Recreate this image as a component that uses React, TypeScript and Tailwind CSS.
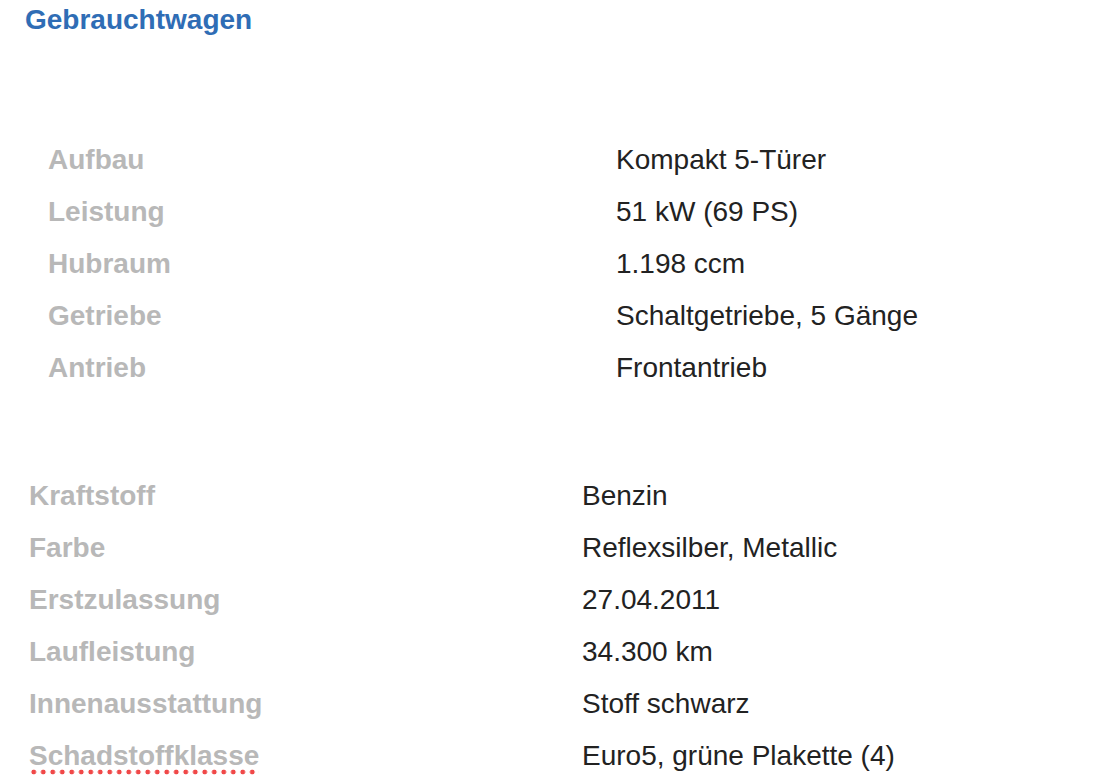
import React from 'react'

const main = [
  ['Aufbau', 'Kompakt 5-Türer'],
  ['Leistung', '51 kW (69 PS)'],
  ['Hubraum', '1.198 ccm'],
  ['Getriebe', 'Schaltgetriebe, 5 Gänge'],
  ['Antrieb', 'Frontantrieb'],
]

const extra = [
  ['Kraftstoff', 'Benzin'],
  ['Farbe', 'Reflexsilber, Metallic'],
  ['Erstzulassung', '27.04.2011'],
  ['Laufleistung', '34.300 km'],
  ['Innenausstattung', 'Stoff schwarz'],
  ['Schadstoffklasse', 'Euro5, grüne Plakette (4)'],
]

export default function App() {
  return (
    <div
      className="w-[1112px] h-[782px] overflow-hidden bg-white text-[28px] leading-[32px]"
      style={{ fontFamily: '"Liberation Sans", Arial, sans-serif' }}
    >
      <h1 className="pl-[25px] pt-[4px] font-bold text-[#2f6db5]">Gebrauchtwagen</h1>

      {/* Technische Daten */}
      <div className="mt-[98px] pl-[48px]">
        {main.map(([label, value]) => (
          <div key={label} className="flex h-[52px] items-center">
            <div className="w-[569px] font-bold text-[#b8b8b8]">{label}</div>
            <div className="-ml-px text-[#222]">{value}</div>
          </div>
        ))}
      </div>

      {/* Weitere Angaben */}
      <div className="mt-[76px] pl-[29px]">
        {extra.map(([label, value]) => (
          <div key={label} className="flex h-[52px] items-center">
            <div className="w-[553px] font-bold text-[#b8b8b8]">
              {label === 'Schadstoffklasse' ? (
                <span className="relative inline-block">
                  {label}
                  {/* spellcheck squiggle */}
                  <span className="absolute left-0 right-0 -bottom-[3px] h-[6px] bg-[radial-gradient(circle,#f04848_2.1px,transparent_2.7px)] bg-[length:9.5px_6px] bg-repeat-x" />
                </span>
              ) : (
                label
              )}
            </div>
            <div className="text-[#222]">{value}</div>
          </div>
        ))}
      </div>
    </div>
  )
}
